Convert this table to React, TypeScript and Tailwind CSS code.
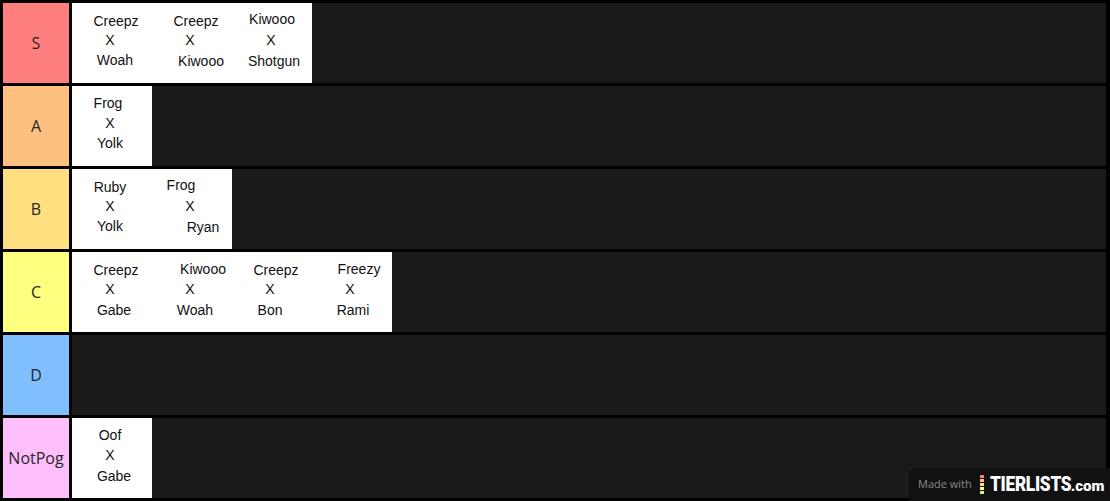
import React from 'react'

type Line = { t: string; x: number; y: number }
type Tile = Line[]

// x = horizontal center inside the 80px tile, y = vertical center
const tile = (a: [string, number, number], b: [string, number, number], c: [string, number, number]): Tile =>
  [a, b, c].map(([t, x, y]) => ({ t, x, y }))

const tiers: { label: string; color: string; tiles: Tile[] }[] = [
  {
    label: 'S',
    color: 'bg-[#ff7f7f]',
    tiles: [
      tile(['Creepz', 44, 18], ['X', 38, 37], ['Woah', 43, 57]),
      tile(['Creepz', 44, 18], ['X', 38, 37], ['Kiwooo', 49, 58]),
      tile(['Kiwooo', 40, 16], ['X', 39, 37], ['Shotgun', 42, 58]),
    ],
  },
  {
    label: 'A',
    color: 'bg-[#ffbf7f]',
    tiles: [tile(['Frog', 36, 17], ['X', 38, 37], ['Yolk', 38, 57])],
  },
  {
    label: 'B',
    color: 'bg-[#ffdf7f]',
    tiles: [
      tile(['Ruby', 38, 18], ['X', 38, 37], ['Yolk', 38, 57]),
      tile(['Frog', 29, 16], ['X', 38, 37], ['Ryan', 51, 58]),
    ],
  },
  {
    label: 'C',
    color: 'bg-[#ffff7f]',
    tiles: [
      tile(['Creepz', 44, 18], ['X', 38, 37], ['Gabe', 42, 58]),
      tile(['Kiwooo', 51, 17], ['X', 38, 37], ['Woah', 43, 58]),
      tile(['Creepz', 44, 18], ['X', 38, 37], ['Bon', 38, 58]),
      tile(['Freezy', 47, 17], ['X', 38, 37], ['Rami', 41, 58]),
    ],
  },
  { label: 'D', color: 'bg-[#7fbfff]', tiles: [] },
  {
    label: 'NotPog',
    color: 'bg-[#ffbfff]',
    tiles: [tile(['Oof', 38, 17], ['X', 38, 37], ['Gabe', 42, 58])],
  },
]

function TileBox({ lines }: { lines: Tile }) {
  return (
    <div className="relative w-20 h-20 bg-white shrink-0 text-[14px] leading-none text-[#111] font-['Liberation_Sans',Arial,sans-serif]">
      {lines.map((l, i) => (
        <span
          key={i}
          className="absolute -translate-x-1/2 -translate-y-1/2 whitespace-nowrap"
          style={{ left: l.x, top: l.y }}
        >
          {l.t}
        </span>
      ))}
    </div>
  )
}

export default function App() {
  return (
    <div className="relative w-[1110px] h-[501px] bg-black p-[3px] pr-[4px] flex flex-col gap-[3px] overflow-hidden">
      {tiers.map((tier) => (
        <div key={tier.label} className="flex gap-[3px] h-20">
          <div
            className={`w-[66px] shrink-0 flex items-center justify-center text-[16px] text-[#262626] font-['Open_Sans',sans-serif] ${tier.color}`}
          >
            {tier.label}
          </div>
          <div className="flex-1 flex bg-[#1a1a1a]">
            {tier.tiles.map((t, i) => (
              <TileBox key={i} lines={t} />
            ))}
          </div>
        </div>
      ))}

      {/* watermark */}
      <div className="absolute right-0 bottom-0 w-[201px] h-[33px] bg-[#111] rounded-tl-[6px] flex items-center pl-[9px] whitespace-nowrap">
        <span className="text-[11px] text-[#8a8a8a] font-['Open_Sans',sans-serif]">Made with</span>
        <div className="ml-[8px] flex flex-col gap-[1px]">
          <span className="block w-[4px] h-[3px] bg-[#ff7f7f]" />
          <span className="block w-[4px] h-[3px] bg-[#ffbf7f]" />
          <span className="block w-[4px] h-[3px] bg-[#ffdf7f]" />
          <span className="block w-[4px] h-[3px] bg-[#ffff7f]" />
          <span className="block w-[4px] h-[3px] bg-[#bfff7f]" />
        </div>
        <div className="ml-[6px] w-[80px] overflow-visible">
          <span className="inline-block origin-left scale-x-[0.86] text-white font-black text-[20px] tracking-[-0.3px] font-['Roboto',sans-serif] leading-none">
            TIERLISTS
          </span>
        </div>
        <span className="ml-[1px] text-white font-black text-[15px] font-['Roboto',sans-serif] leading-none mt-[3px]">
          .com
        </span>
      </div>
    </div>
  )
}
